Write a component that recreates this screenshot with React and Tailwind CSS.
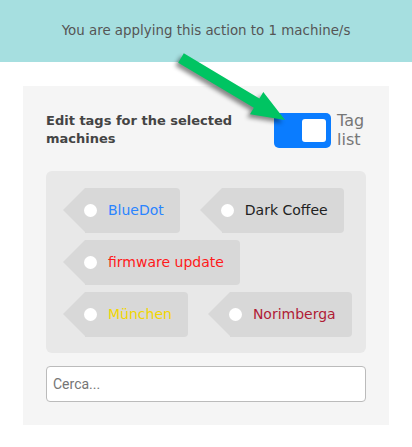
const tags = [
  { name: 'BlueDot', color: 'text-[#2a84ff]' },
  { name: 'Dark Coffee', color: 'text-[#222222]' },
  { name: 'firmware update', color: 'text-[#ff1a1a]' },
  { name: 'München', color: 'text-[#f2d600]' },
  { name: 'Norimberga', color: 'text-[#b01c36]' },
];

function Tag({ name, color }) {
  return (
    <div className="flex h-[45px]">
      <div className="w-0 h-0 border-y-[22.5px] border-y-transparent border-r-[22px] border-r-[#d8d8d8]" />
      <div className="flex items-center h-full bg-[#d8d8d8] rounded-r-[4px] pr-[16px]">
        <span className="w-[13px] h-[13px] rounded-full bg-white -ml-[1px]" />
        <span className={`ml-[11px] text-[14px] ${color}`}>{name}</span>
      </div>
    </div>
  );
}

function Arrow() {
  return (
    <svg
      className="absolute top-0 left-0 pointer-events-none"
      width="412"
      height="447"
      viewBox="0 0 412 447"
      style={{ filter: 'drop-shadow(-3px 3px 2px rgba(0,0,0,0.45))' }}
    >
      <polygon
        points="183.8,53.3 259.4,98.4 263.3,91.9 285,120 250,114.3 253.8,107.8 178.2,62.7"
        fill="#00c462"
      />
    </svg>
  );
}

export default function App() {
  return (
    <div className="relative w-[412px] h-[447px] bg-white font-['DejaVu_Sans',sans-serif] overflow-hidden">
      <div className="h-[62px] bg-[#a6dfe0] flex items-center justify-center">
        <p className="text-[13.4px] text-[#555555]">You are applying this action to 1 machine/s</p>
      </div>

      <div className="mt-[24px] mx-[23px] bg-[#f5f5f5] px-[23px] pt-[25px] pb-[23px]">
        <div className="flex items-center justify-between">
          <h2 className="w-[210px] text-[13px] font-bold leading-[18px] text-[#444444]">
            Edit tags for the selected machines
          </h2>
          <div className="flex items-center mr-[-1px]">
            <div className="w-[57px] h-[35px] bg-[#0a7cff] rounded-[5px] flex items-center justify-end pr-[5px]">
              <div className="w-[24px] h-[23px] bg-white rounded-[3px]" />
            </div>
            <span className="ml-[6px] w-[30px] text-[16px] leading-[19px] text-[#777777]">Tag list</span>
          </div>
        </div>

        <div className="mt-[22px] bg-[#e8e8e8] rounded-[6px] pl-[17px] pr-[6px] pt-[17px] pb-[16px] flex flex-wrap gap-x-[20px] gap-y-[7px]">
          {tags.map((t) => (
            <Tag key={t.name} {...t} />
          ))}
        </div>

        <input
          type="text"
          placeholder="Cerca..."
          className="mt-[13px] w-full h-[36px] border border-[#bbbbbb] rounded-[4px] bg-white px-[6px] text-[14px] font-['Roboto',sans-serif] placeholder:text-[#757575] outline-none"
        />
      </div>

      <Arrow />
    </div>
  );
}
